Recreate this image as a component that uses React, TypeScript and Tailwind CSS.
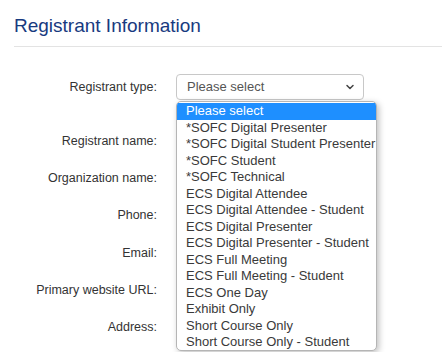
import { ChevronDown } from 'lucide-react'

const options = [
  'Please select',
  '*SOFC Digital Presenter',
  '*SOFC Digital Student Presenter',
  '*SOFC Student',
  '*SOFC Technical',
  'ECS Digital Attendee',
  'ECS Digital Attendee - Student',
  'ECS Digital Presenter',
  'ECS Digital Presenter - Student',
  'ECS Full Meeting',
  'ECS Full Meeting - Student',
  'ECS One Day',
  'Exhibit Only',
  'Short Course Only',
  'Short Course Only - Student',
]

const fields = [
  'Registrant name:',
  'Organization name:',
  'Phone:',
  'Email:',
  'Primary website URL:',
  'Address:',
]

export default function App() {
  return (
    <div
      className="w-[442px] h-[352px] overflow-hidden bg-white text-[#333]"
      style={{ fontFamily: '"Liberation Sans", Arial, sans-serif' }}
    >
      <div className="pl-[14px] pt-[15px]">
        <h1 className="text-[19px] leading-[22px] text-[#183a80]">Registrant Information</h1>
        <div className="mt-[9px] border-b border-[#e3e3e3]" />
      </div>

      <div className="mt-[27px] flex flex-col">
        <div className="flex items-center h-[26px]">
          <label className="w-[157px] text-right text-[12.5px] whitespace-nowrap">Registrant type:</label>
          <div className="relative ml-[19px]">
            <div className="w-[188px] h-[26px] flex items-center justify-between pl-[10px] pr-[7px] border border-[#c8c8c8] rounded-[4px] text-[13px] text-[#555]">
              <span>Please select</span>
              <ChevronDown size={12} strokeWidth={3} className="text-[#444]" />
            </div>
            <div className="absolute z-10 left-0 top-[27px] w-[201px] h-[250px] py-[1px] bg-white border border-[#b5b5b5] rounded-[5px] shadow-[2px_2px_6px_rgba(0,0,0,0.25)] overflow-hidden">
              {options.map((o, i) => (
                <div
                  key={o}
                  className={
                    i === 0
                      ? 'h-[16.5px] leading-[16.5px] px-[9px] text-[13px] whitespace-nowrap bg-[#1e8fff] text-white'
                      : 'h-[16.5px] leading-[16.5px] px-[9px] text-[13px] whitespace-nowrap text-[#3a3a3a]'
                  }
                >
                  {o}
                </div>
              ))}
            </div>
          </div>
        </div>

        <div className="mt-[28px] flex flex-col gap-[11.3px]">
          {fields.map((f) => (
            <div key={f} className="flex items-center h-[26px]">
              <label className="w-[157px] text-right text-[12.5px] whitespace-nowrap">{f}</label>
              <div className="ml-[19px] w-[188px] h-[26px] border border-[#c8c8c8] rounded-[4px]" />
            </div>
          ))}
        </div>
      </div>
    </div>
  )
}
